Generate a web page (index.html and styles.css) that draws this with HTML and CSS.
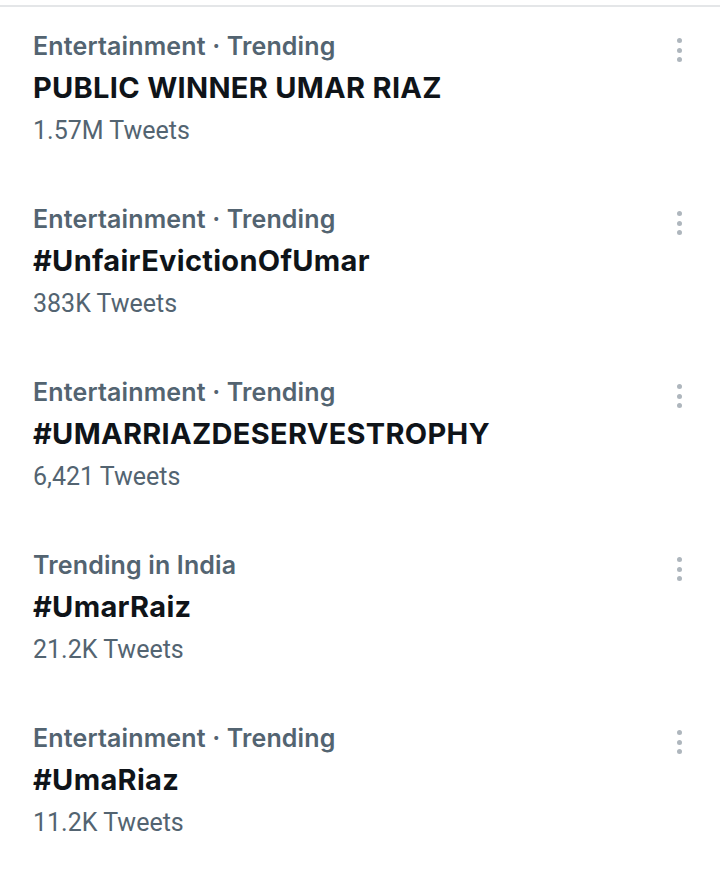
FILE: index.html
```html
<!DOCTYPE html>
<html>
<head>
<meta charset="utf-8">
<link rel="stylesheet" href="styles.css">
</head>
<body>
<div class="list">
  <div class="trend">
    <div class="text">
      <div class="cat">Entertainment · Trending</div>
      <div class="title">PUBLIC WINNER UMAR RIAZ</div>
      <div class="count">1.57M Tweets</div>
    </div>
    <div class="more"><span></span><span></span><span></span></div>
  </div>
  <div class="trend">
    <div class="text">
      <div class="cat">Entertainment · Trending</div>
      <div class="title">#UnfairEvictionOfUmar</div>
      <div class="count">383K Tweets</div>
    </div>
    <div class="more"><span></span><span></span><span></span></div>
  </div>
  <div class="trend">
    <div class="text">
      <div class="cat">Entertainment · Trending</div>
      <div class="title">#UMARRIAZDESERVESTROPHY</div>
      <div class="count">6,421 Tweets</div>
    </div>
    <div class="more"><span></span><span></span><span></span></div>
  </div>
  <div class="trend">
    <div class="text">
      <div class="cat">Trending in India</div>
      <div class="title">#UmarRaiz</div>
      <div class="count">21.2K Tweets</div>
    </div>
    <div class="more"><span></span><span></span><span></span></div>
  </div>
  <div class="trend">
    <div class="text">
      <div class="cat">Entertainment · Trending</div>
      <div class="title">#UmaRiaz</div>
      <div class="count">11.2K Tweets</div>
    </div>
    <div class="more"><span></span><span></span><span></span></div>
  </div>
</div>
</body>
</html>
```
FILE: styles.css
```css
html, body {
  margin: 0;
  padding: 0;
  background: #ffffff;
}
.list {
  margin-top: 5px;
  border-top: 2px solid #e4e6e8;
  width: 720px;
}
.trend {
  display: flex;
  justify-content: space-between;
  padding: 24px 0 34px 33px;
}
.text {
  display: flex;
  flex-direction: column;
}
.cat {
  font-family: Inter, "Liberation Sans", sans-serif;
  font-weight: 600;
  font-size: 25px;
  line-height: 30px;
  letter-spacing: 0.15px;
  color: #536471;
}
.title {
  font-family: Inter, "Liberation Sans", sans-serif;
  font-weight: 700;
  font-size: 29px;
  line-height: 36px;
  letter-spacing: 0.3px;
  margin-top: 9px;
  color: #0f1419;
}
.count {
  font-family: Roboto, "Liberation Sans", sans-serif;
  font-size: 25px;
  line-height: 30px;
  margin-top: 10px;
  color: #536471;
}
.more {
  display: flex;
  flex-direction: column;
  gap: 4.5px;
  padding-top: 7px;
  margin-right: 38px;
}
.more span {
  width: 5px;
  height: 5px;
  border-radius: 50%;
  background: #aeb6bd;
}
```
